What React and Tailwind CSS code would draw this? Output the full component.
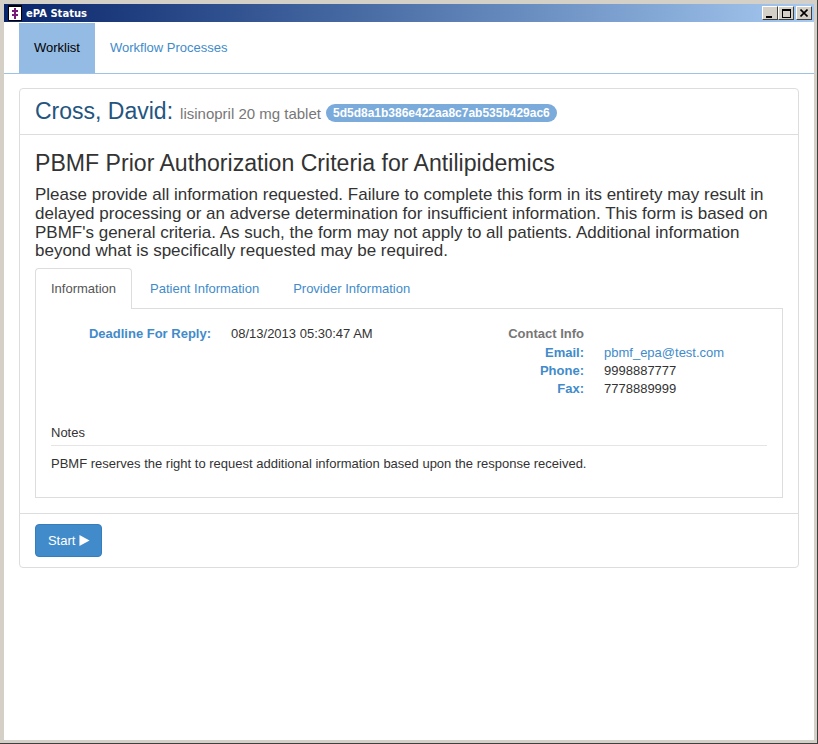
import React from 'react';

function TitleIcon() {
  return (
    <svg width="14" height="16" viewBox="0 0 14 16" className="ml-[4px] shrink-0">
      <rect width="14" height="16" fill="#000" />
      <rect x="1" y="2" width="12" height="13" fill="#fff" />
      <path d="M7 3v11M4 6h6M4 10h6" stroke="#7a1a7a" strokeWidth="2" fill="none" />
    </svg>
  );
}

function WinButton({ children }) {
  return (
    <div className="w-[16px] h-[14px] bg-[#d4d0c8] border border-t-white border-l-white border-r-[#404040] border-b-[#404040] flex items-center justify-center">
      {children}
    </div>
  );
}

function ContactRow({ label, children }) {
  return (
    <div className="flex h-[18px] items-center">
      <span className="w-[90px] text-right font-bold text-[#428bca]">{label}</span>
      <span className="ml-[20px]">{children}</span>
    </div>
  );
}

export default function App() {
  return (
    <div className="w-[818px] h-[744px] border-r border-b border-[#404040] overflow-hidden">
      <div className="h-full flex flex-col bg-white text-[13px] text-[#333] border-t-[4px] border-l-[4px] border-r-[3px] border-b-[3px] border-[#d4d0c8] font-['Liberation_Sans',Arial,sans-serif]">
        {/* title bar */}
        <div className="h-[18px] shrink-0 flex items-center bg-gradient-to-r from-[#0a246a] to-[#a6caf0]">
          <TitleIcon />
          <span className="ml-[4px] text-[10px] font-bold text-white font-['DejaVu_Sans',sans-serif]">ePA Status</span>
          <div className="ml-auto flex items-center mr-[2px]">
            <WinButton>
              <div className="w-[6px] h-[2px] bg-black mt-[7px] mr-[2px]" />
            </WinButton>
            <WinButton>
              <div className="w-[9px] h-[9px] border border-black border-t-2" />
            </WinButton>
            <div className="ml-[2px]">
              <WinButton>
                <svg width="8" height="8" viewBox="0 0 8 8">
                  <path d="M0.5 0.5l7 7M7.5 0.5l-7 7" stroke="#000" strokeWidth="1.6" />
                </svg>
              </WinButton>
            </div>
          </div>
        </div>

        {/* nav */}
        <div className="h-[52px] shrink-0 flex pt-[1px] pl-[15px] border-b border-[#9cc2e5]">
          <div className="w-[76px] h-[50px] bg-[#94bbe3] text-black flex items-center justify-center">Worklist</div>
          <div className="ml-[15px] h-[50px] flex items-center text-[#428bca]">Workflow Processes</div>
        </div>

        {/* panel */}
        <div className="mt-[14px] mx-[15px] h-[480px] shrink-0 flex flex-col border border-[#ddd] rounded-[4px]">
          <div className="h-[46px] shrink-0 flex items-center px-[15px] border-b border-[#ddd]">
            <span className="text-[23px] text-[#245580]">Cross, David:</span>
            <span className="ml-[7px] mt-[5px] text-[15px] text-[#777]">lisinopril 20 mg tablet</span>
            <span className="ml-[5px] mt-[3px] h-[18px] px-[7px] flex items-center rounded-[10px] bg-[#7aabdb] text-white text-[12px] font-bold">
              5d5d8a1b386e422aa8c7ab535b429ac6
            </span>
          </div>

          <div className="flex-1 px-[15px] pt-[14px]">
            <h3 className="text-[23.1px] leading-[28px]">PBMF Prior Authorization Criteria for Antilipidemics</h3>
            <p className="mt-[9px] text-[17px] leading-[18.75px]">
              Please provide all information requested. Failure to complete this form in its entirety may result in delayed processing or an adverse determination for insufficient information. This form is based on PBMF's general criteria. As such, the form may not apply to all patients. Additional information beyond what is specifically requested may be required.
            </p>

            {/* tabs */}
            <div className="mt-[7px] h-[41px] flex border-b border-[#ddd]">
              <div className="w-[97px] h-[41px] flex items-center justify-center bg-white text-[#555] border border-[#ddd] border-b-0 rounded-t-[4px]">Information</div>
              <div className="ml-[2px] px-[16px] h-[41px] flex items-center text-[#428bca]">Patient Information</div>
              <div className="ml-[2px] px-[16px] h-[41px] flex items-center text-[#428bca]">Provider Information</div>
            </div>

            <div className="h-[189px] border border-t-0 border-[#ddd] px-[15px]">
              <div className="h-[115px] flex pt-[16px]">
                <div className="w-[443px] flex h-[18px] items-center">
                  <span className="w-[160px] text-right font-bold text-[#428bca]">Deadline For Reply:</span>
                  <span className="ml-[20px]">08/13/2013 05:30:47 AM</span>
                </div>
                <div>
                  <div className="w-[90px] h-[19px] pb-[1px] flex items-center justify-end font-bold text-[#777] whitespace-nowrap">Contact Info</div>
                  <ContactRow label="Email:"><span className="text-[#428bca]">pbmf_epa@test.com</span></ContactRow>
                  <ContactRow label="Phone:">9998887777</ContactRow>
                  <ContactRow label="Fax:">7778889999</ContactRow>
                </div>
              </div>
              <div className="h-[22px] pb-[4px] flex items-center border-b border-[#e5e5e5]">Notes</div>
              <p className="mt-[9px] leading-[17px]">PBMF reserves the right to request additional information based upon the response received.</p>
            </div>
          </div>

          {/* footer */}
          <div className="h-[54px] shrink-0 px-[15px] pt-[10px] border-t border-[#ddd]">
            <button className="w-[67px] h-[33px] pl-[1px] flex items-center justify-center rounded-[4px] bg-[#428bca] border border-[#357ebd] text-white">
              Start&nbsp;
              <svg width="11" height="11" viewBox="0 0 11 12"><path d="M0 0l11 6-11 6z" fill="#fff" /></svg>
            </button>
          </div>
        </div>
      </div>
    </div>
  );
}
